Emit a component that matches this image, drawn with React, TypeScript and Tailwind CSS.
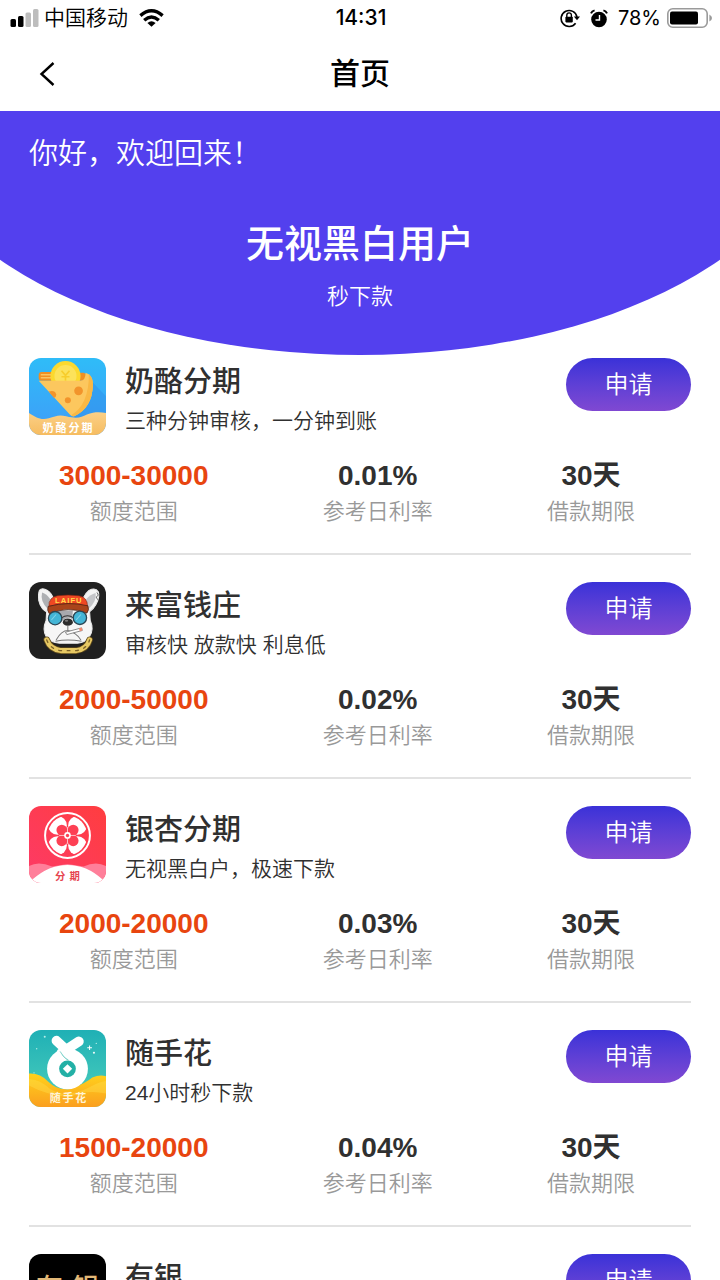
import type { ReactNode } from 'react';

type Product = {
  name: string;
  slogan?: string;
  range?: string;
  rate?: string;
  term?: string;
  logo: ReactNode;
};

const CheeseLogo = () => (
  <svg viewBox="27 36 230 230" className="h-full w-full" aria-hidden="true">
    <defs>
      <linearGradient id="cheeseSky" x1="0" y1="0" x2="0" y2="1">
        <stop offset="0" stopColor="#2fbcf8" />
        <stop offset="1" stopColor="#3f9cf8" />
      </linearGradient>
      <linearGradient id="cheeseSand" x1="0" y1="0" x2="0" y2="1">
        <stop offset="0" stopColor="#fbd087" />
        <stop offset="1" stopColor="#f6bc60" />
      </linearGradient>
    </defs>
    <rect x="27" y="36" width="230" height="230" fill="url(#cheeseSky)" />
    <path d="M216 108L257 150V236H120L160 208Z" fill="#2f8de8" opacity="0.45" />
    <rect x="56" y="78" width="50" height="26" rx="9" fill="#f08f22" />
    <path d="M62 86H96M62 95H96" stroke="#fbc462" strokeWidth="5" />
    <path d="M170 80H190Q201 82 200 104H170Z" fill="#f08f22" />
    <circle cx="136" cy="90" r="45" fill="#fbd92f" />
    <circle cx="136" cy="90" r="33" fill="#fce25b" />
    <path d="M124 74L136 88L148 74M136 88V104M124 92H148" stroke="#f7cd2c" strokeWidth="5" fill="none" />
    <path d="M56 104H180Q196 104 196 80Q218 86 218 116Q216 186 162 210Q154 212 149 205Z" fill="#fcc75e" />
    <path d="M218 116Q216 186 162 210Q156 211 153 207Q206 176 206 84Q218 96 218 116Z" fill="#f9b844" />
    <circle cx="175" cy="134" r="13" fill="#f2942b" />
    <circle cx="143" cy="162" r="9" fill="#f2942b" />
    <path d="M86 136Q104 130 108 144Q109 153 101 155Z" fill="#f2942b" />
    <path d="M27 200C46 212 62 223 86 216C106 210 116 204 138 210C170 218 182 214 200 205C222 196 240 198 257 200V266H27Z" fill="url(#cheeseSand)" />
    <text x="145" y="256" textAnchor="middle" fontSize="33" fontWeight="700" letterSpacing="6" fill="#fff">奶酪分期</text>
  </svg>
);

const DogLogo = () => (
  <svg viewBox="27 35 230 230" className="h-full w-full" aria-hidden="true">
    <rect x="27" y="35" width="230" height="230" fill="#202020" />
    <g stroke="#e9e9e9" strokeWidth="3" strokeLinejoin="round">
      <path d="M58 60Q66 50 82 60Q94 68 100 84L86 128Q62 118 56 90Q54 70 58 60Z" fill="#f4f4f4" />
      <path d="M234 64Q226 50 206 60Q196 68 188 84L200 128Q222 118 232 92Q238 74 234 64Z" fill="#f4f4f4" />
      <path d="M84 100H202Q210 124 210 150Q222 176 208 198Q196 216 172 218H118Q90 216 78 198Q66 176 78 150Q78 124 84 100Z" fill="#f6f6f6" />
    </g>
    <path d="M66 66Q60 92 82 114L90 86Q80 70 66 66Z" fill="#aeb0b3" />
    <path d="M226 68Q230 92 206 114L198 86Q210 72 226 68Z" fill="#c4c5c8" />
    <path d="M112 120H158L156 146Q142 136 128 150L118 160Q122 136 112 120Z" fill="#a8a9ae" />
    <path d="M230 66l4 8l-6 6l4 8" stroke="#333" strokeWidth="2" fill="none" />
    <path d="M86 108Q86 80 112 76Q144 72 176 76Q202 80 202 108Q144 92 86 108Z" fill="#ef4823" stroke="#7a2414" strokeWidth="2" />
    <path d="M84 108Q144 92 203 106Q208 118 200 128Q144 106 88 130Q80 120 84 108Z" fill="#a9441b" stroke="#3b1a10" strokeWidth="2" />
    <text x="146" y="97" textAnchor="middle" fontSize="23" fontWeight="700" letterSpacing="3" fill="#ffd94a">LAIFU</text>
    <path d="M124 142Q142 130 160 142" stroke="#333" strokeWidth="3" fill="none" />
    <circle cx="105" cy="143" r="20" fill="#43b5d6" stroke="#2b4654" strokeWidth="4" />
    <circle cx="179" cy="142" r="20" fill="#43b5d6" stroke="#2b4654" strokeWidth="4" />
    <path d="M94 148L108 132M168 148L182 132" stroke="#7fd3ea" strokeWidth="3" />
    <ellipse cx="143" cy="155" rx="15" ry="11" fill="#2c2c2c" />
    <ellipse cx="139" cy="151" rx="5" ry="3" fill="#777" />
    <path d="M143 166V180Q124 180 108 208M143 180Q168 186 182 208M106 212Q142 204 184 212" stroke="#777" strokeWidth="3" fill="none" />
    <path d="M136 185L184 172L186 180L140 192Z" fill="#fff" stroke="#555" strokeWidth="2" />
    <path d="M176 174L185 171L187 179L179 182Z" fill="#f08a70" />
    <g fill="none" strokeLinecap="round">
      <path d="M80 208Q90 236 122 240H168Q200 236 208 208" stroke="#5d481c" strokeWidth="20" />
      <path d="M80 208Q90 236 122 240H168Q200 236 208 208" stroke="#e7c964" strokeWidth="15" />
      <path d="M80 208Q90 236 122 240H168Q200 236 208 208" stroke="#7b6026" strokeWidth="4" strokeDasharray="8 17" />
    </g>
  </svg>
);

const GinkgoLogo = () => (
  <svg viewBox="27 33 230 230" className="h-full w-full" aria-hidden="true">
    <defs>
      <linearGradient id="ginkgoBg" x1="1" y1="0" x2="0" y2="1">
        <stop offset="0" stopColor="#ff3d3f" />
        <stop offset="1" stopColor="#fd3a67" />
      </linearGradient>
      <clipPath id="ginkgoDisc">
        <circle cx="142" cy="121" r="59" />
      </clipPath>
    </defs>
    <rect x="27" y="33" width="230" height="230" fill="url(#ginkgoBg)" />
    <circle cx="142" cy="121" r="67" fill="none" stroke="#fff" strokeWidth="6" />
    <g clipPath="url(#ginkgoDisc)" fill="#fff">
      <circle cx="112" cy="91" r="28" />
      <circle cx="172" cy="91" r="28" />
      <circle cx="112" cy="151" r="28" />
      <circle cx="172" cy="151" r="28" />
    </g>
    <g fill="#fd4054">
      <circle cx="125" cy="105" r="16" />
      <circle cx="159" cy="105" r="16" />
      <circle cx="125" cy="137" r="16" />
      <circle cx="159" cy="137" r="16" />
    </g>
    <path d="M142 96V146M117 121H167" stroke="#fff" strokeWidth="2" />
    <circle cx="142" cy="121" r="10" fill="#fff" />
    <circle cx="142" cy="121" r="5" fill="#fd4054" />
    <path d="M27 212Q56 196 96 214L142 206L190 214Q226 196 257 212V263H27Z" fill="#ff7f9a" />
    <path d="M27 243L38 252Q86 209 142 209Q200 209 246 252L257 243V263H27Z" fill="#fff" />
    <text x="148" y="253" textAnchor="middle" fontSize="31" fontWeight="700" letterSpacing="12" fill="#e6454f">分期</text>
  </svg>
);

const FlowerLogo = () => (
  <svg viewBox="27 30 230 230" className="h-full w-full" aria-hidden="true">
    <defs>
      <linearGradient id="flowerBg" x1="0" y1="0" x2="0" y2="1">
        <stop offset="0" stopColor="#1fb0b5" />
        <stop offset="1" stopColor="#4fd0bd" />
      </linearGradient>
      <linearGradient id="flowerWave" x1="0" y1="0" x2="0" y2="1">
        <stop offset="0" stopColor="#ffd21c" />
        <stop offset="1" stopColor="#fb9f1f" />
      </linearGradient>
    </defs>
    <rect x="27" y="30" width="230" height="230" fill="url(#flowerBg)" />
    <path d="M27 160Q60 158 84 184Q112 212 150 206Q196 190 216 172Q238 162 257 168V260H27Z" fill="url(#flowerWave)" />
    <path d="M27 176Q58 176 90 206Q140 236 206 202Q236 184 257 182V220Q200 206 150 230Q80 226 27 196Z" fill="#ffdf4c" opacity="0.4" />
    <circle cx="142" cy="146" r="61" fill="#fff" />
    <path d="M109 62L148 98M176 64L124 98" stroke="#fff" strokeWidth="29" strokeLinecap="round" />
    <path d="M120 94Q130 112 145 120Q132 116 120 94Z" fill="#27b3a8" stroke="#27b3a8" strokeWidth="1" />
    <circle cx="142" cy="146" r="25" fill="#23b0a6" />
    <path d="M142 132L156 146L142 160L128 146Z" fill="#fff" />
    <path d="M208 76V90M201 83H215M221 95V101M218 98H224" stroke="#fff" strokeWidth="3" />
    <circle cx="74" cy="50" r="3" fill="#b6ede8" />
    <circle cx="228" cy="70" r="2" fill="#b6ede8" />
    <circle cx="42" cy="158" r="2" fill="#b6ede8" />
    <circle cx="50" cy="86" r="2" fill="#b6ede8" />
    <text x="146" y="246" textAnchor="middle" fontSize="33" fontWeight="700" letterSpacing="5" fill="#fff3d6">随手花</text>
  </svg>
);

const SilverLogo = () => (
  <svg viewBox="27 34 230 230" className="h-full w-full" aria-hidden="true">
    <rect x="27" y="34" width="230" height="230" fill="#000" />
    <text x="48" y="164" fontSize="80" fontWeight="500" fill="#e2b877">有</text>
    <text x="156" y="164" fontSize="80" fontWeight="500" fill="#e2b877">银</text>
  </svg>
);

const products: Product[] = [
  { name: '奶酪分期', slogan: '三种分钟审核，一分钟到账', range: '3000-30000', rate: '0.01%', term: '30天', logo: <CheeseLogo /> },
  { name: '来富钱庄', slogan: '审核快 放款快 利息低', range: '2000-50000', rate: '0.02%', term: '30天', logo: <DogLogo /> },
  { name: '银杏分期', slogan: '无视黑白户，极速下款', range: '2000-20000', rate: '0.03%', term: '30天', logo: <GinkgoLogo /> },
  { name: '随手花', slogan: '24小时秒下款', range: '1500-20000', rate: '0.04%', term: '30天', logo: <FlowerLogo /> },
  { name: '有银', logo: <SilverLogo /> }
];

const StatusBar = () => (
  <div className="grid h-9 shrink-0 grid-cols-[1fr_auto_1fr] items-center pr-2 pl-[10px] font-['Inter','Noto_Sans_CJK_SC',sans-serif] text-[20px] text-black">
    <div className="flex items-center">
      <svg width="29" height="18" viewBox="0 0 29 18" aria-hidden="true">
        <rect x="0.5" y="10" width="5.5" height="8" rx="1.5" />
        <rect x="8" y="7" width="5.5" height="11" rx="1.5" />
        <rect x="15.5" y="3.5" width="5.5" height="14.5" rx="1.5" fill="#bdbdbd" />
        <rect x="23" y="0" width="5.5" height="18" rx="1.5" fill="#bdbdbd" />
      </svg>
      <span className="ml-[5px] text-[21px] font-[350]">中国移动</span>
      <svg width="25" height="18" viewBox="0 0 25 18" className="ml-[11px]" fill="none" stroke="#000" strokeWidth="3.4" aria-hidden="true">
        <path d="M1.4 6.6Q12.5 -3 23.6 6.6" />
        <path d="M5.2 11.2Q12.5 4.8 19.8 11.2" />
        <path d="M8.4 14Q12.5 10.4 16.6 14L12.5 17.8Z" fill="#000" stroke="none" />
      </svg>
    </div>
    <span className="text-[21px] font-medium">14:31</span>
    <div className="flex items-center justify-end">
      <svg width="20" height="20" viewBox="0 0 20 20" fill="none" stroke="#000" strokeWidth="1.6" aria-hidden="true">
        <path d="M15.6 15.2A8 8 0 1 1 17 9" />
        <path d="M13.8 8.6H20L17 12.2Z" fill="#000" stroke="none" />
        <rect x="5.4" y="8.8" width="7.4" height="5.6" rx="0.8" fill="#000" stroke="none" />
        <path d="M6.8 9V7.2a2.3 2.3 0 0 1 4.6 0V9" strokeWidth="1.4" />
      </svg>
      <svg width="18" height="19" viewBox="0 0 18 19" className="ml-[10px]" fill="none" aria-hidden="true">
        <circle cx="9" cy="10.5" r="7.8" fill="#000" />
        <path d="M9.5 6V11H5.5" stroke="#fff" strokeWidth="1.4" />
        <path d="M1 4.4Q2 2 4.6 1.4M17 4.4Q16 2 13.4 1.4" stroke="#000" strokeWidth="2" />
      </svg>
      <span className="ml-[10px]">78%</span>
      <svg width="45" height="20" viewBox="0 0 45 20" className="ml-[6px]" fill="none" aria-hidden="true">
        <rect x="0.8" y="0.8" width="39.4" height="18.4" rx="5" stroke="#9a9a9a" strokeWidth="1.6" />
        <rect x="3" y="3.4" width="28" height="13" rx="2" fill="#000" />
        <path d="M42.4 6.5Q45 8 45 10Q45 12 42.4 13.5Z" fill="#9a9a9a" />
      </svg>
    </div>
  </div>
);

const Stat = ({ value, label, accent }: { value: string; label: string; accent?: boolean }) => (
  <div className="flex flex-col items-center">
    <dt className="order-last text-[22px] leading-9 font-[350] text-[#999]">{label}</dt>
    <dd className={accent ? 'text-[28px] leading-9 font-bold text-[#e8450f]' : 'text-[28px] leading-9 font-bold text-[#303030]'}>
      {value}
    </dd>
  </div>
);

const ProductItem = ({ product }: { product: Product }) => (
  <li className="mb-[27px] border-b-2 border-[#e2e2e2] pb-[23px]">
    <div className="flex items-start">
      <div className="h-[77px] w-[77px] shrink-0 overflow-hidden rounded-[12px]">{product.logo}</div>
      <div className="ml-[19px] min-w-0 flex-1">
        <h3 className="text-[29px] leading-[48px] font-medium text-[#303030]">{product.name}</h3>
        <p className="text-[21px] leading-[30px] font-[350] text-[#303030]">{product.slogan}</p>
      </div>
      <button
        type="button"
        className="h-[53px] w-[125px] shrink-0 rounded-full bg-linear-to-b from-[#3a31d8] to-[#8048d2] text-[24px] font-[350] text-white"
      >
        申请
      </button>
    </div>
    {product.range && product.rate && product.term && (
      <dl className="mt-[22px] flex justify-between pr-14 pl-[30px]">
        <Stat value={product.range} label="额度范围" accent />
        <Stat value={product.rate} label="参考日利率" />
        <Stat value={product.term} label="借款期限" />
      </dl>
    )}
  </li>
);

export default function App() {
  return (
    <div className="flex h-screen flex-col bg-white font-['Liberation_Sans','Noto_Sans_CJK_SC',sans-serif]" lang="zh-CN">
      <StatusBar />

      <header className="grid h-[75px] shrink-0 grid-cols-[1fr_auto_1fr] items-center px-[35px]">
        <button type="button" aria-label="返回" className="flex h-11 w-6 items-center justify-center">
          <svg width="16" height="24" viewBox="0 0 16 24" fill="none" stroke="#000" strokeWidth="2.4" aria-hidden="true">
            <path d="M14.5 1L2.5 12L14.5 23" />
          </svg>
        </button>
        <h1 className="text-[30px] font-medium text-black">首页</h1>
      </header>

      <main className="flex-1 overflow-x-hidden overflow-y-auto [scrollbar-width:none]">
        {/* Welcome banner, wider than the page so only the middle of the curve shows */}
        <section className="-mx-[13%] bg-[#5340ee] px-[13%] pt-[21px] pb-[42px] text-white [border-radius:0_0_50%_50%/0_0_100%_100%]">
          <p className="px-[29px] text-[29px] leading-[44px] font-[350]">你好，欢迎回来！</p>
          <h2 className="mt-11 text-center text-[38px] leading-[48px] font-medium">无视黑白用户</h2>
          <p className="mt-[13px] text-center text-[22px] leading-8 font-[350]">秒下款</p>
        </section>

        {/* Product list */}
        <ul className="px-[29px] pt-[3px]">
          {products.map((product) => (
            <ProductItem key={product.name} product={product} />
          ))}
        </ul>
      </main>
    </div>
  );
}
